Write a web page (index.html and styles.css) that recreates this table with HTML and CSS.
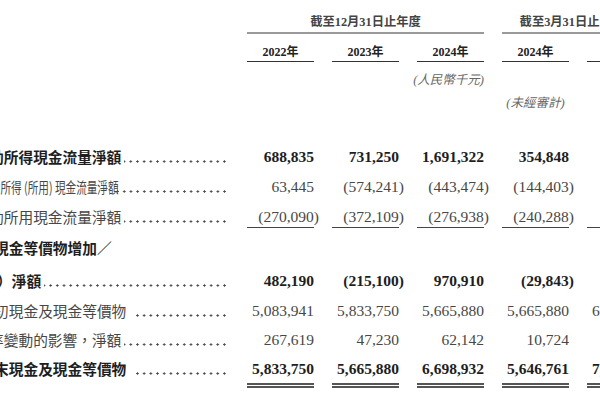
FILE: index.html
```html
<!DOCTYPE html>
<html lang="zh-Hant">
<head>
<meta charset="utf-8">
<title>現金流量</title>
<link rel="stylesheet" href="styles.css">
</head>
<body>
<div class="sheet">
  <div class="row head-group">
    <div></div>
    <div class="group g1">截至12月31日止年度</div>
    <div class="group g2">截至3月31日止三個月</div>
  </div>
  <div class="row head-years">
    <div></div>
    <div class="yr">2022年</div>
    <div class="yr">2023年</div>
    <div class="yr">2024年</div>
    <div class="yr">2024年</div>
    <div class="yr">2025年</div>
  </div>
  <div class="row unit-row">
    <div></div>
    <div class="unit">(人民幣千元)</div>
  </div>
  <div class="row unaudited-row">
    <div></div>
    <div class="unaudited">(未經審計)</div>
  </div>

  <div class="body">
    <div class="row data bold">
      <div class="label"><span class="text">經營活動所得現金流量淨額</span><span class="leader"></span></div>
      <div class="num">688,835</div>
      <div class="num">731,250</div>
      <div class="num">1,691,322</div>
      <div class="num">354,848</div>
      <div class="num">492,315</div>
    </div>
    <div class="row data">
      <div class="label"><span class="squeeze"><span class="squeeze-inner">投資活動所得 (所用) 現金流量淨額</span></span><span class="leader"></span></div>
      <div class="num">63,445</div>
      <div class="num"><span class="neg">(574,241)</span></div>
      <div class="num"><span class="neg">(443,474)</span></div>
      <div class="num"><span class="neg">(144,403)</span></div>
      <div class="num"><span class="neg">(98,216)</span></div>
    </div>
    <div class="row data">
      <div class="label"><span class="text">融資活動所用現金流量淨額</span><span class="leader"></span></div>
      <div class="num ul"><span class="neg">(270,090)</span></div>
      <div class="num ul"><span class="neg">(372,109)</span></div>
      <div class="num ul"><span class="neg">(276,938)</span></div>
      <div class="num ul"><span class="neg">(240,288)</span></div>
      <div class="num ul"><span class="neg">(92,525)</span></div>
    </div>
    <div class="row data bold">
      <div class="label shifted"><span class="text">現金及現金等價物增加／</span></div>
    </div>
    <div class="row data bold extra">
      <div class="label shifted-more"><span class="text">（減少）淨額</span><span class="leader"></span></div>
      <div class="num">482,190</div>
      <div class="num"><span class="neg">(215,100)</span></div>
      <div class="num">970,910</div>
      <div class="num"><span class="neg">(29,843)</span></div>
      <div class="num">301,574</div>
    </div>
    <div class="row data">
      <div class="label shifted"><span class="text">年╱期初現金及現金等價物</span><span class="leader spaced"></span></div>
      <div class="num">5,083,941</div>
      <div class="num">5,833,750</div>
      <div class="num">5,665,880</div>
      <div class="num">5,665,880</div>
      <div class="num">6,698,932</div>
    </div>
    <div class="row data tight">
      <div class="label"><span class="text">外匯匯率變動的影響，淨額</span><span class="leader"></span></div>
      <div class="num">267,619</div>
      <div class="num">47,230</div>
      <div class="num">62,142</div>
      <div class="num">10,724</div>
      <div class="num">12,036</div>
    </div>
    <div class="row data bold tight">
      <div class="label shifted"><span class="text">年╱期末現金及現金等價物</span><span class="leader spaced"></span></div>
      <div class="num dbl">5,833,750</div>
      <div class="num dbl">5,665,880</div>
      <div class="num dbl">6,698,932</div>
      <div class="num dbl">5,646,761</div>
      <div class="num dbl">7,012,542</div>
    </div>
  </div>
</div>
</body>
</html>
```

FILE: styles.css
```css
html, body {
  margin: 0;
  padding: 0;
  background: #ffffff;
  width: 600px;
  height: 400px;
  overflow: hidden;
}

.sheet {
  margin-left: -55px;
  width: 709px;
  font-family: "Liberation Serif", "Noto Sans CJK TC", serif;
  color: #333;
}

.row {
  display: grid;
  grid-template-columns: 284px repeat(5, 67px);
  column-gap: 18px;
}

/* header */
.head-group {
  padding-top: 14px;
}

.group {
  font-family: "Liberation Serif", "Noto Sans CJK TC", sans-serif;
  font-weight: 700;
  font-size: 12.3px;
  line-height: 16px;
  text-align: center;
  color: #444;
  white-space: nowrap;
  padding-bottom: 2px;
  border-bottom: 2px solid #9a9a9a;
}

.g1 { grid-column: 2 / 5; }
.g2 { grid-column: 5 / 7; }

.head-years {
  margin-top: 10px;
}

.yr {
  font-weight: 700;
  font-size: 12px;
  line-height: 16px;
  text-align: center;
  color: #222;
  padding-bottom: 1px;
  border-bottom: 1.5px solid #333;
}

.unit-row {
  margin-top: 10px;
}

.unit {
  grid-column: 2 / 5;
  text-align: right;
  font-style: italic;
  font-size: 12.5px;
  line-height: 16px;
  color: #666;
}

.unaudited-row {
  margin-top: 7px;
}

.unaudited {
  grid-column: 5;
  text-align: center;
  font-style: italic;
  font-size: 12.5px;
  line-height: 16px;
  color: #666;
}

/* body rows */
.body {
  margin-top: 35.5px;
  display: flex;
  flex-direction: column;
  gap: 10px;
}

.data {
  font-size: 15.5px;
  line-height: 20px;
  color: #474747;
}

.data.bold {
  font-weight: 700;
  color: #1e1e1e;
}

.data.extra {
  margin-top: 3.5px;
}

.data.tight {
  margin-top: -1px;
}

.label {
  display: flex;
  align-self: start;
  height: 20px;
  min-width: 0;
  white-space: nowrap;
  font-family: "Noto Sans CJK TC", sans-serif;
  font-size: 14.7px;
}

.label.shifted {
  padding-left: 5px;
}

.label.shifted-more {
  padding-left: 8px;
}

.label .text {
  flex: none;
}

.squeeze {
  flex: none;
  display: inline-block;
  width: 155.5px;
  margin-left: 12.6px;
}

.squeeze-inner {
  display: inline-block;
  white-space: nowrap;
  transform: scaleX(0.723);
  transform-origin: left center;
}

.leader {
  flex: 1;
  min-width: 0;
  margin-left: 3px;
  background-image: radial-gradient(circle, #4a4a4a 0, #4a4a4a 0.9px, rgba(74, 74, 74, 0) 1.4px);
  background-size: 6.7px 3px;
  background-repeat: repeat-x;
  background-position: right 1px bottom 4px;
}

.leader.spaced {
  margin-left: 7px;
}

.num {
  text-align: right;
  white-space: nowrap;
}

.neg {
  display: inline-block;
  margin-right: -5px;
}

.ul {
  border-bottom: 1.5px solid #444;
}

.dbl {
  padding-bottom: 4px;
  border-bottom: 5px double #555;
}
```
